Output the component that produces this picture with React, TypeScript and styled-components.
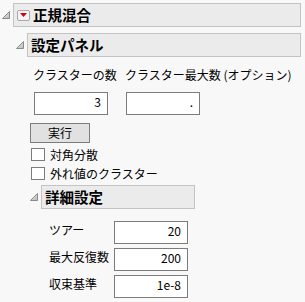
import styled, { createGlobalStyle } from 'styled-components'

const GlobalStyle = createGlobalStyle`
	body {
		margin: 0;
		background: #f8f8f8;
		font-family: "Noto Sans CJK JP", "Noto Sans", sans-serif;
		color: #000;
	}
`

const Page = styled.div`
	width: 305px;
	height: 302px;
	padding-top: 3px;
	box-sizing: border-box;
	background: #f8f8f8;
	overflow: hidden;
`

const OutlineRow = styled.div<{ $toggle: number; $width?: number }>`
	display: flex;
	align-items: center;
	.toggle {
		width: ${p => p.$toggle}px;
		flex: none;
		display: flex;
		justify-content: flex-end;
		padding-right: 3px;
		box-sizing: border-box;
	}
	.box {
		${p => (p.$width ? `width: ${p.$width}px; flex: none;` : 'flex: 1;')}
		margin-right: 4px;
		height: 24px;
		box-sizing: border-box;
		border: 1px solid #c3c3c3;
		background: #ebebeb;
		display: flex;
		align-items: center;
		padding-left: 3px;
		gap: 3px;
		font-size: 14.5px;
		font-weight: 700;
		line-height: 20px;
	}
`

const Body = styled.div<{ $indent: number; $top: number }>`
	padding-left: ${p => p.$indent}px;
	margin-top: ${p => p.$top}px;
`

const MenuButton = styled.span`
	width: 13px;
	height: 11px;
	box-sizing: border-box;
	border: 1px solid #a8a8a8;
	border-radius: 2px;
	background: #f4f4f4;
	display: flex;
	align-items: center;
	justify-content: center;
`

const FieldGrid = styled.div`
	display: grid;
	grid-template-columns: 92px 100px;
	column-gap: 0;
	row-gap: 9px;
	padding-left: 3px;
	margin-top: 10px;
	font-size: 12px;
	line-height: 16px;
	white-space: nowrap;
`

const NumberBox = styled.div<{ $w?: number }>`
	width: ${p => p.$w ?? 74}px;
	height: 23px;
	box-sizing: border-box;
	border: 1px solid #7c7c7c;
	background: #fff;
	font-size: 12px;
	line-height: 16px;
	text-align: right;
	padding: 1px 6px 0 0;
	margin-left: 1px;
`

const RunButton = styled.div`
	width: 60px;
	height: 20px;
	margin-top: 8px;
	box-sizing: border-box;
	border: 1px solid #7c7c7c;
	background: #e1e1e1;
	font-size: 12px;
	line-height: 18px;
	text-align: center;
`

const CheckRow = styled.label`
	display: flex;
	align-items: center;
	gap: 5px;
	height: 19px;
	margin-left: 1px;
	font-size: 12px;
	&:first-of-type {
		margin-top: 2px;
	}
	.box {
		width: 14px;
		height: 13px;
		box-sizing: border-box;
		border: 1px solid #7c7c7c;
		background: #fff;
	}
`

const ParamGrid = styled.div`
	display: grid;
	grid-template-columns: 65px 74px;
	row-gap: 4px;
	margin-top: 12px;
	font-size: 12px;
	line-height: 16px;
	white-space: nowrap;
	span {
		padding-top: 1px;
	}
	${NumberBox} {
		margin-left: 0;
	}
`

const Disclosure = () => (
	<svg width="8" height="8" viewBox="0 0 8 8">
		<defs>
			<linearGradient id="tri" x1="0" y1="0" x2="1" y2="1">
				<stop offset="0" stopColor="#f0f0f0" />
				<stop offset="1" stopColor="#b8b8b8" />
			</linearGradient>
		</defs>
		<polygon points="0.5,7.5 7.5,0.5 7.5,7.5" fill="url(#tri)" stroke="#8a8a8a" strokeWidth="1" />
	</svg>
)

const RedArrow = () => (
	<svg width="7" height="4" viewBox="0 0 7 4">
		<polygon points="0,0 7,0 3.5,4" fill="#d0021b" />
	</svg>
)

export default function App() {
	return (
		<Page>
			<GlobalStyle />
			<OutlineRow $toggle={13}>
				<span className="toggle"><Disclosure /></span>
				<div className="box">
					<MenuButton><RedArrow /></MenuButton>
					正規混合
				</div>
			</OutlineRow>
			<Body $indent={14} $top={6}>
				<OutlineRow $toggle={13}>
					<span className="toggle"><Disclosure /></span>
					<div className="box">設定パネル</div>
				</OutlineRow>
				<Body $indent={16} $top={0}>
					<FieldGrid>
						<span>クラスターの数</span>
						<span>クラスター最大数 (オプション)</span>
						<NumberBox>3</NumberBox>
						<NumberBox>.</NumberBox>
					</FieldGrid>
					<RunButton>実行</RunButton>
					<CheckRow><span className="box" />対角分散</CheckRow>
					<CheckRow><span className="box" />外れ値のクラスター</CheckRow>
					<Body $indent={0} $top={2}>
						<OutlineRow $toggle={11} $width={154}>
							<span className="toggle"><Disclosure /></span>
							<div className="box">詳細設定</div>
						</OutlineRow>
						<Body $indent={19} $top={0}>
							<ParamGrid>
								<span>ツアー</span>
								<NumberBox>20</NumberBox>
								<span>最大反復数</span>
								<NumberBox>200</NumberBox>
								<span>収束基準</span>
								<NumberBox>1e-8</NumberBox>
							</ParamGrid>
						</Body>
					</Body>
				</Body>
			</Body>
		</Page>
	)
}
